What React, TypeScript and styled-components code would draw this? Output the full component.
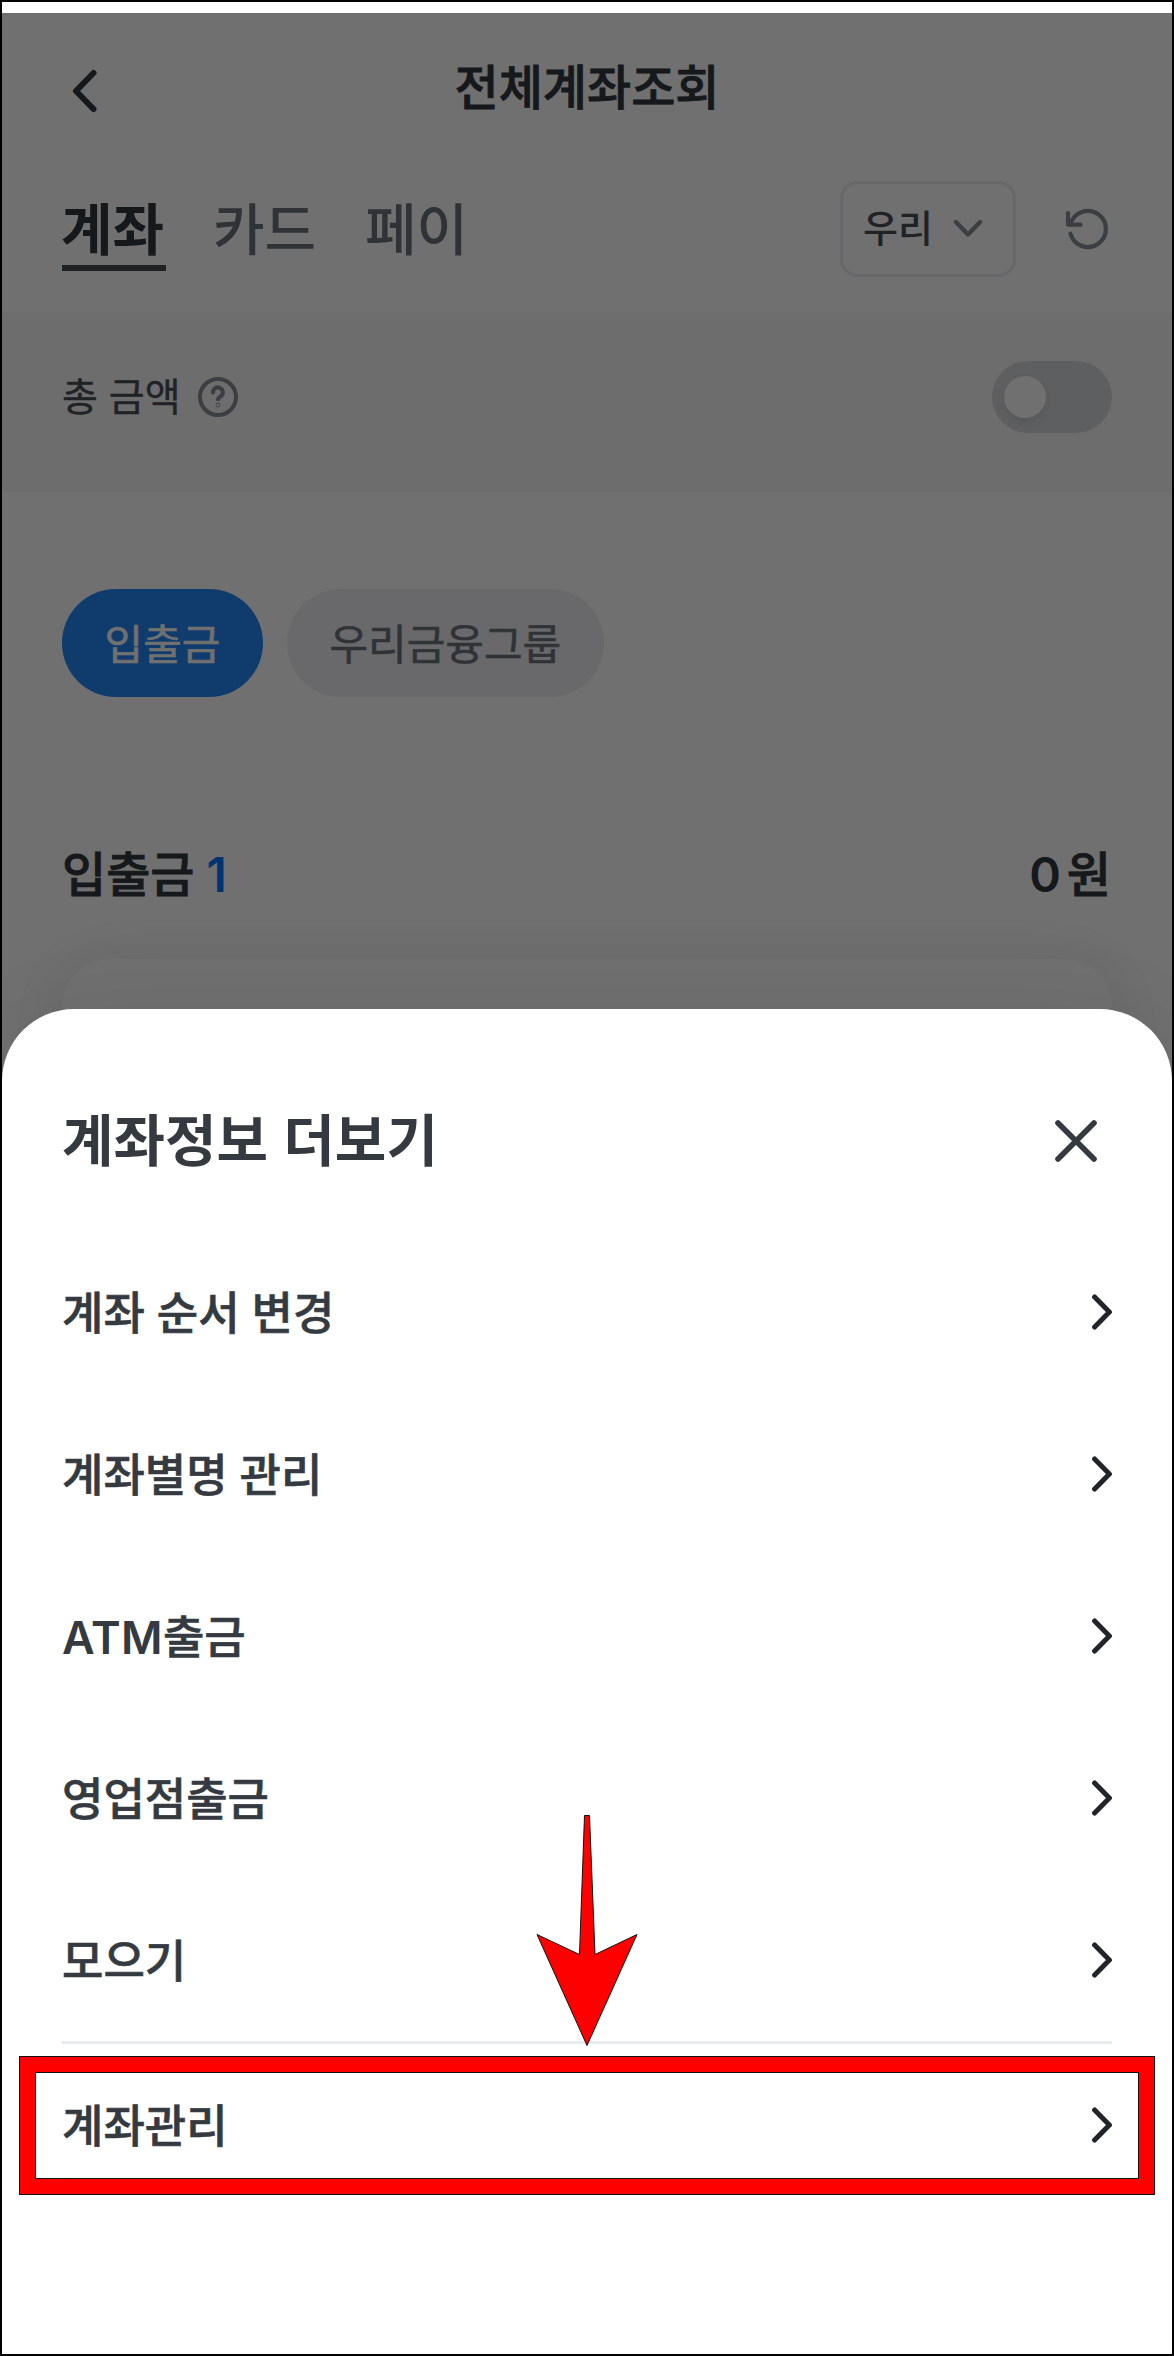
import React from 'react';
import styled, { createGlobalStyle } from 'styled-components';

const GlobalStyle = createGlobalStyle`
  *, *::before, *::after { box-sizing: border-box; }
  body { margin: 0; background: #fff; }
  button { font: inherit; color: inherit; border: 0; padding: 0; background: none; }
`;

const Screen = styled.div`
  position: relative;
  width: 1174px;
  height: 2356px;
  border: 2px solid #000;
  background: #fff;
  overflow: hidden;
  display: flex;
  flex-direction: column;
  font-family: Inter, 'Noto Sans CJK KR', sans-serif;
  color: #343a40;
`;

const StatusGap = styled.div`
  flex: none;
  height: 11px;
`;

const Page = styled.div`
  position: relative;
  height: 2341px;
  display: flex;
  flex-direction: column;
`;

const Header = styled.header`
  display: grid;
  grid-template-columns: 60px 1fr 60px;
  align-items: center;
  height: 148px;
  padding: 0 60px;
`;

const BackButton = styled.button`
  display: flex;
  margin-top: 8px;
  padding-left: 8px;
`;

const PageTitle = styled.h1`
  margin: 2px 0 0;
  font-size: 48px;
  font-weight: 500;
  line-height: 72px;
  text-align: center;
  -webkit-text-stroke: 0.8px;
`;

const TabBar = styled.nav`
  display: flex;
  align-items: center;
  justify-content: space-between;
  height: 152px;
  padding: 0 63px 16px 60px;
`;

const Tabs = styled.div`
  display: flex;
  gap: 48px;
`;

const Tab = styled.button<{ $active?: boolean }>`
  width: 104px;
  height: 80px;
  margin-top: 4px;
  padding-top: 3px;
  border-bottom: 6px solid ${(p) => (p.$active ? '#495057' : 'transparent')};
  color: ${(p) => (p.$active ? '#343a40' : '#6c757d')};
  font-size: 56px;
  font-weight: ${(p) => (p.$active ? 700 : 500)};
  line-height: 56px;
  text-align: left;
  text-indent: -1px;
  white-space: nowrap;
`;

const Tools = styled.div`
  display: flex;
  align-items: center;
  gap: 49px;
`;

const BankSelect = styled.button`
  display: flex;
  align-items: center;
  gap: 20px;
  width: 176px;
  height: 96px;
  padding: 0 0 2px 20px;
  border: 3px solid #e9ecef;
  border-radius: 18px;
  color: #495057;
  font-size: 38px;
  font-weight: 500;
  line-height: 56px;
`;

const TotalBand = styled.section`
  display: flex;
  align-items: center;
  justify-content: space-between;
  height: 180px;
  padding: 0 60px 12px;
  background: #f8f8f8;
`;

const TotalLabel = styled.div`
  display: flex;
  align-items: center;
  gap: 17px;
  color: #495057;
  font-size: 39px;
  line-height: 56px;
  -webkit-text-stroke: 0.4px;
`;

const Switch = styled.div`
  display: flex;
  align-items: center;
  width: 120px;
  height: 72px;
  padding-left: 12px;
  border-radius: 36px;
  background: #d7d9dc;
`;

const Knob = styled.div`
  width: 42px;
  height: 42px;
  border-radius: 50%;
  background: #fff;
  box-shadow: 0 4px 8px rgba(60, 70, 90, 0.12);
`;

const Chips = styled.div`
  display: flex;
  gap: 24px;
  padding: 96px 60px 0;
`;

const Chip = styled.button<{ $active?: boolean }>`
  height: 108px;
  padding: 4px 42.5px 0;
  border-radius: 54px;
  background: ${(p) => (p.$active ? '#2288f5' : '#eef0f3')};
  color: ${(p) => (p.$active ? '#fff' : '#6c757d')};
  font-size: 42px;
  line-height: 60px;
  -webkit-text-stroke: 0.6px;
`;

const GroupHead = styled.div`
  display: flex;
  justify-content: space-between;
  margin-top: 142px;
  padding: 0 61px 0 60px;
  font-size: 48px;
  font-weight: 500;
  line-height: 72px;
  -webkit-text-stroke: 0.8px;
`;

const GroupName = styled.div`
  display: flex;
  gap: 12px;
`;

const Digit = styled.span<{ $accent?: boolean }>`
  color: ${(p) => (p.$accent ? '#0074ff' : 'inherit')};
  font-weight: 600;
  -webkit-text-stroke: 0;
`;

const Amount = styled.div`
  display: flex;
  gap: 6px;
`;

const AccountCard = styled.div`
  height: 400px;
  margin: 48px 60px 0;
  border-radius: 48px;
  background: #fff;
  box-shadow: 0 6px 60px rgba(73, 90, 110, 0.14);
`;

const Dim = styled.div`
  position: absolute;
  inset: 0;
  background: rgba(0, 0, 0, 0.56);
`;

const Sheet = styled.section`
  position: absolute;
  inset: 996px 0 0;
  padding: 72px 60px 0;
  border-radius: 72px 72px 0 0;
  background: #fff;
  box-shadow: 0 0 90px rgba(0, 0, 0, 0.06);
`;

const SheetHead = styled.div`
  display: flex;
  align-items: center;
  justify-content: space-between;
  height: 120px;
  margin-bottom: 30px;
  padding-right: 15px;
`;

const SheetTitle = styled.h2`
  margin: 0;
  font-size: 56px;
  font-weight: 700;
  line-height: 84px;
  word-spacing: 2px;
`;

const Menu = styled.ul`
  margin: 0;
  padding: 0;
  list-style: none;
`;

const MenuItem = styled.li<{ $divided?: boolean }>`
  display: flex;
  align-items: center;
  justify-content: space-between;
  height: ${(p) => (p.$divided ? 165 : 162)}px;
  border-top: ${(p) => (p.$divided ? '3px solid #e9ecef' : '0')};
`;

const MenuLabel = styled.span`
  padding-top: 4px;
  font-size: 45px;
  font-weight: 500;
  line-height: 64px;
  -webkit-text-stroke: 0.6px;
`;

const Latin = styled.span`
  font-weight: 600;
  letter-spacing: 0.3px;
  -webkit-text-stroke: 0;
`;

const Highlight = styled.div`
  position: absolute;
  left: 17px;
  top: 2054px;
  width: 1136px;
  height: 139px;
  border: 1px solid #111;
  padding: 16px;
  background:
    linear-gradient(red, red) top / 100% 15px no-repeat,
    linear-gradient(red, red) bottom / 100% 15px no-repeat,
    linear-gradient(red, red) left / 15px 100% no-repeat,
    linear-gradient(red, red) right / 15px 100% no-repeat;
  &::before {
    content: '';
    display: block;
    height: 107px;
    margin: -1px;
    border: 1px solid #111;
  }
`;

const Pointer = styled.svg`
  position: absolute;
  left: 533px;
  top: 1811px;
`;

const items: { latin?: string; label: string }[] = [
  { label: '계좌 순서 변경' },
  { label: '계좌별명 관리' },
  { latin: 'ATM', label: '출금' },
  { label: '영업점출금' },
  { label: '모으기' },
  { label: '계좌관리' },
];

const BackIcon = () => (
  <svg width="32" height="48" viewBox="0 0 32 48" fill="none" stroke="#343a40" strokeWidth="6" strokeLinecap="round" strokeLinejoin="round">
    <path d="M23.5 6 L6 24 L23.5 42" />
  </svg>
);

const DownIcon = () => (
  <svg width="30" height="20" viewBox="0 0 30 20" fill="none" stroke="#868e96" strokeWidth="4.4" strokeLinecap="round" strokeLinejoin="round">
    <path d="M3 4 L15 16.5 L27 4" />
  </svg>
);

const RefreshIcon = () => (
  <svg width="44" height="44" viewBox="0 0 44 44" fill="none" stroke="#868e96" strokeWidth="4.2" strokeLinecap="round" strokeLinejoin="round">
    <path d="M3 6 V17.7 H15.5" />
    <path d="M5.5 17.3 A18 18 0 1 1 5.5 26.7" />
  </svg>
);

const HelpIcon = () => (
  <svg width="40" height="40" viewBox="0 0 40 40" fill="none" stroke="#868e96" strokeWidth="4" strokeLinecap="round" strokeLinejoin="round">
    <circle cx="20" cy="20" r="18" />
    <path d="M15 15.6 A4.9 4.9 0 1 1 22.6 19.4 Q20 21 20 22.6" />
    <circle cx="20" cy="28.2" r="0.4" />
  </svg>
);

const CloseIcon = () => (
  <svg width="42" height="42" viewBox="0 0 42 42" stroke="#343a40" strokeWidth="5.6" strokeLinecap="round">
    <path d="M3 3 L39 39 M39 3 L3 39" />
  </svg>
);

const NextIcon = () => (
  <svg width="20" height="36" viewBox="0 0 20 36" fill="none" stroke="#212529" strokeWidth="5" strokeLinecap="round" strokeLinejoin="round">
    <path d="M2.6 3 L17.4 18 L2.6 33" />
  </svg>
);

export default function App() {
  return (
    <Screen>
      <GlobalStyle />
      <StatusGap />
      <Page>
        <Header>
          <BackButton aria-label="뒤로"><BackIcon /></BackButton>
          <PageTitle>전체계좌조회</PageTitle>
        </Header>
        <TabBar>
          <Tabs>
            <Tab $active>계좌</Tab>
            <Tab>카드</Tab>
            <Tab>페이</Tab>
          </Tabs>
          <Tools>
            <BankSelect>우리<DownIcon /></BankSelect>
            <RefreshIcon />
          </Tools>
        </TabBar>
        <TotalBand>
          <TotalLabel>총 금액<HelpIcon /></TotalLabel>
          <Switch><Knob /></Switch>
        </TotalBand>
        <Chips>
          <Chip $active>입출금</Chip>
          <Chip>우리금융그룹</Chip>
        </Chips>
        <GroupHead>
          <GroupName>입출금<Digit $accent>1</Digit></GroupName>
          <Amount><Digit>0</Digit><span>원</span></Amount>
        </GroupHead>
        <AccountCard />
        <Dim />
        <Sheet>
          <SheetHead>
            <SheetTitle>계좌정보 더보기</SheetTitle>
            <CloseIcon />
          </SheetHead>
          <Menu>
            {items.map(({ latin, label }, i) => (
              <MenuItem key={label} $divided={i === items.length - 1}>
                <MenuLabel>{latin && <Latin>{latin}</Latin>}{label}</MenuLabel>
                <NextIcon />
              </MenuItem>
            ))}
          </Menu>
        </Sheet>
      </Page>
      <Highlight />
      <Pointer width="108" height="238" viewBox="0 0 108 238">
        <path d="M49.5 2.5 H54.5 L60 141.5 L102 121.5 L52 232.5 L2 121.5 L44.5 141.5 Z" fill="red" stroke="#111" strokeWidth="1" />
      </Pointer>
    </Screen>
  );
}
